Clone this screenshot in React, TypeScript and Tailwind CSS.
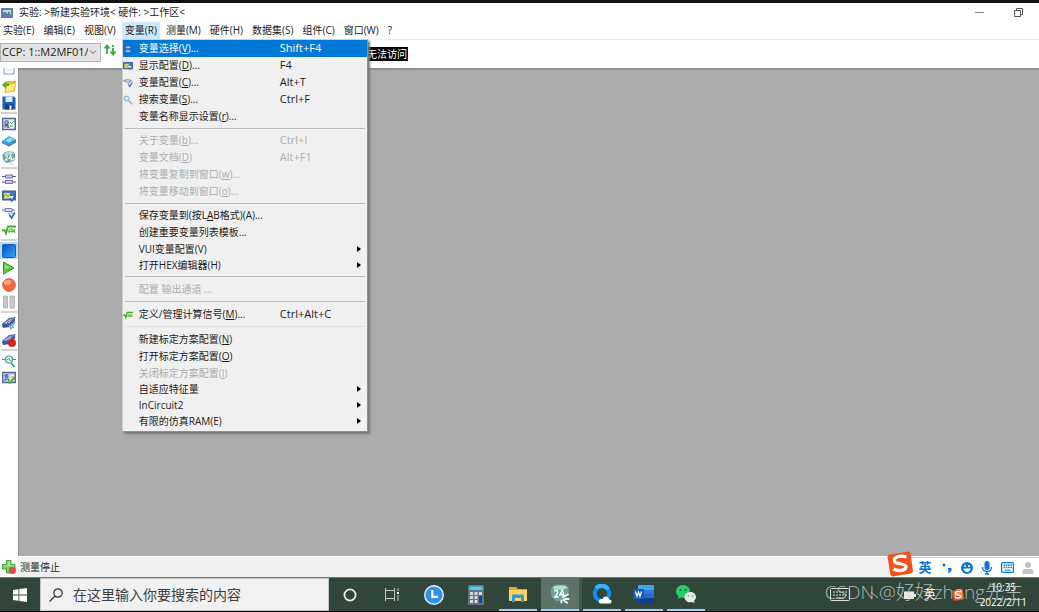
import React, { useState } from 'react';

type Item = {
  label: string;
  shortcut?: string;
  disabled?: boolean;
  submenu?: boolean;
  compact?: boolean;
  icon?: React.ReactNode;
};

const Svg = ({ children, className = 'w-3.5 h-3.5' }: { children: React.ReactNode; className?: string }) => (
  <svg viewBox="0 0 14 14" className={className} aria-hidden="true">{children}</svg>
);

const NewIcon = () => (
  <Svg>
    <path d="M2 0H12V13H2Z" fill="#fff" stroke="#7f9ccb" />
    <path d="M4 9H10" stroke="#d5e0f2" />
  </Svg>
);

const OpenIcon = () => (
  <Svg>
    <path d="M4 3L8 2L9 3L13.5 2L12.5 12L3 13.5Z" fill="#f0bd2b" stroke="#c4962d" strokeWidth=".6" />
    <path d="M5 6L13.5 4L12 12L3 13.5Z" fill="#fff176" stroke="#cfa52d" strokeWidth=".5" />
    <path d="M0 6L4 2V4.5H7V7H4V9.5Z" fill="#45b32e" />
  </Svg>
);

const SaveIcon = () => (
  <Svg>
    <path d="M.5 .5H12L13.5 2V13.5H.5Z" fill="#1d60b5" />
    <path d="M3.5 .5H10.5V6H3.5Z" fill="#d8ecff" />
    <path d="M3 8.5H11V13.5H3Z" fill="#123f80" />
    <path d="M7.5 9.5H9.5V13.5H7.5Z" fill="#fff" />
  </Svg>
);

const PanelIcon = () => (
  <Svg>
    <path d="M.7 1.5H13.3V12.5H.7Z" fill="#e5edf8" stroke="#526792" strokeWidth="1.4" />
    <path d="M2.5 3.5H7V10.5H2.5Z" fill="#a9b8d4" />
    <circle cx="4.5" cy="5.5" r="1.7" fill="#c7d4e7" stroke="#35446d" />
    <path d="M3 10.5V8H6V11" fill="none" stroke="#35446d" />
    <path d="M5 10.5H7.5" stroke="#c5506c" />
    <path d="M8 5L9.5 6.5L12 4M8 9H11" fill="none" stroke="#4cae3e" />
  </Svg>
);

const BookIcon = () => (
  <Svg>
    <path d="M0 7L7 2L14 5.5L7 11Z" fill="#45b5e3" />
    <path d="M0 7L7 10L14 5.5V8.5L7 12.5L0 9Z" fill="#3565ab" />
    <path d="M4 6.5L8 3.5L11 5.5L7 8.5Z" fill="#8de0f3" />
    <path d="M1 8.5L7 11L13 7.5" fill="none" stroke="#8fc4ec" strokeWidth=".6" />
  </Svg>
);

const InstrumentIcon = ({ className }: { className?: string }) => (
  <Svg className={className}>
    <path d="M2 1.5L5 .5H10.5L13 2.5V8L10 11L4.5 12L1 9L.5 4Z" fill="#6aa39a" />
    <path d="M2 2L5 1H10L12.5 2.5L9 4H3Z" fill="#b7d9d0" />
    <path d="M3 5C5 4 6 5 5 7L3.5 9H6M9 4L7 7.5H10M9.3 5.5V9" fill="none" stroke="#fff" strokeWidth="1.1" />
    <path d="M8.5 9.5L13 7M9 10.5L13.5 10.5M9 11L12.5 13.5M8 11L8 13.5" stroke="#e6f4f0" strokeWidth="1.4" />
    <path d="M8.5 10.2L12.5 9M8.5 12L10.5 13.5" stroke="#568c86" strokeWidth=".5" />
  </Svg>
);

const BarsIcon = () => (
  <Svg>
    <path d="M0 4.5H14M0 10H14" stroke="#575a87" />
    <path d="M3.5 3H10.5V6H3.5ZM3.5 8.5H10.5V11.5H3.5Z" fill="#c9c8ff" stroke="#5557a0" strokeWidth=".8" />
  </Svg>
);

const DisplayIcon = () => (
  <Svg>
    <path d="M.7 2H13.3V11H.7Z" fill="#4f79bd" stroke="#31599c" strokeWidth="1.2" />
    <path d="M2 4H8V9.5H2Z" fill="#f0e65c" />
    <path d="M2 8L4 5L6 8L8 5" fill="none" stroke="#569049" strokeWidth=".8" />
    <path d="M7 7H13L10.5 13Z" fill="#e8f1ff" />
    <path d="M8 9L9.8 12L13.5 6" fill="none" stroke="#2464bd" strokeWidth="1.5" />
  </Svg>
);

const ConfigIcon = () => (
  <Svg>
    <path d="M0 4H13" stroke="#5864a4" />
    <path d="M3 2.5H10V5.5H3Z" fill="#d7dcff" stroke="#5963a0" strokeWidth=".8" />
    <path d="M6.5 7H12.5L9.5 13Z" fill="#dcecff" stroke="#5473b5" strokeWidth=".6" />
    <path d="M7.5 9L9.5 12L13 6.5" fill="none" stroke="#2c62b2" strokeWidth="1.4" />
  </Svg>
);

const FormulaIcon = () => (
  <Svg>
    <path d="M0 7.5L2.5 7L4 10.5L6 3.5H14" fill="none" stroke="#3dad25" strokeWidth="1.8" />
    <path d="M7 9.8V7L8.5 6H10V9.5M10.5 7H12.5V10M7 8.5H13" fill="none" stroke="#4ab934" strokeWidth="1.2" />
  </Svg>
);

const SearchVarIcon = () => (
  <Svg>
    <circle cx="5" cy="5" r="3.5" fill="#c9efff" stroke="#6fb5d9" strokeWidth="1.4" />
    <path d="M8 8L13 13" stroke="#d69a76" strokeWidth="2.2" />
  </Svg>
);

const StopIcon = () => (
  <Svg>
    <defs>
      <linearGradient id="stop" x2="1" y2="1"><stop stopColor="#0753bc" /><stop offset="1" stopColor="#31a4ff" /></linearGradient>
    </defs>
    <rect x=".5" y=".5" width="13" height="13" rx="1" fill="url(#stop)" stroke="#1761bb" />
  </Svg>
);

const PlayIcon = () => (
  <Svg>
    <path d="M1.5 1L12 7L1.5 13Z" fill="#58c53a" stroke="#3e9c2c" strokeLinejoin="round" />
    <path d="M3 3.5L9 6.5L3 8Z" fill="#95df75" />
  </Svg>
);

const RecordIcon = () => (
  <Svg>
    <circle cx="7" cy="7" r="6.4" fill="#f8663e" stroke="#d75536" strokeWidth=".8" />
    <ellipse cx="5.5" cy="4.5" rx="3.5" ry="2.5" fill="#ffab83" />
  </Svg>
);

const PauseIcon = () => (
  <Svg>
    <path d="M1.5 1H5.5V13H1.5ZM8 1H12.5V13H8Z" fill="#c9c9c9" stroke="#a9a9a9" strokeWidth=".8" />
  </Svg>
);

const ChipIcon = ({ record }: { record?: boolean }) => (
  <Svg>
    <path d="M0 8L7 2L14 1L8 9L1 11Z" fill="#466eb7" />
    <path d="M2 7.5L8 3.5L12 2.5L7 7Z" fill="#d4e2f7" />
    <path d="M5 7L11 3" stroke="#bd4254" />
    <path d="M0 9L7 8L13 2V5L8 11L1 12Z" fill="#355aa3" />
    {record ? <circle cx="10" cy="10" r="3.8" fill="#df2115" stroke="#aa1711" strokeWidth=".5" /> : (
      <path d="M7 9L9 13L13 6M9 8L12 12" fill="none" stroke="#89a7d3" strokeWidth="1.4" />
    )}
  </Svg>
);

const ZoomSignalIcon = () => (
  <Svg>
    <path d="M0 5.5H3M11 5.5H14" stroke="#349887" strokeWidth="1.2" />
    <circle cx="7" cy="5.5" r="3.5" fill="#eefaf7" stroke="#459c8c" strokeWidth="1.2" />
    <path d="M5 5.5H6L7 4L8 7L9 5.5" fill="none" stroke="#35887b" strokeWidth=".7" />
    <path d="M9 8.5L12.5 13" stroke="#4a9c8f" strokeWidth="1.8" />
  </Svg>
);

const EditPanelIcon = () => (
  <Svg>
    <path d="M.7 1.5H13.3V11.5H.7Z" fill="#c1d2eb" stroke="#536791" strokeWidth="1.3" />
    <circle cx="4.5" cy="5" r="2" fill="#65769c" />
    <path d="M3 10V8H6.5V10" fill="none" stroke="#4a5c88" />
    <path d="M8 4.5H12M8 7.5H11" stroke="#fff" strokeWidth="1.2" />
    <path d="M7 12.5L12.5 6.5" stroke="#49ba2d" strokeWidth="2.2" />
    <circle cx="12.6" cy="6.6" r="1" fill="#e55336" />
  </Svg>
);

const WordIcon = () => (
  <svg viewBox="0 0 22 20" className="w-[22px] h-5" aria-hidden="true">
    <rect x="5" y="1" width="16" height="18" rx="1" fill="#2b6bc4" />
    <path d="M5 2Q5 1 6 1H20Q21 1 21 2V6H5Z" fill="#41a5ee" />
    <path d="M5 6H21V10H5Z" fill="#2b7cd3" />
    <path d="M5 14H21V18Q21 19 20 19H6Q5 19 5 18Z" fill="#103f91" />
    <rect y="5" width="11" height="10" rx="1" fill="#185abd" />
    <path d="M2.5 7.5L4 12.5L5.5 8L7 12.5L8.5 7.5" fill="none" stroke="#fff" strokeWidth="1.2" />
  </svg>
);

const WeChatIcon = () => (
  <svg viewBox="0 0 22 20" className="w-[22px] h-5" aria-hidden="true">
    <path d="M8 1C3.5 1 1 4 1 7.5C1 9.5 2 11 3.5 12L3 15L6 13.5C11 15 15 12 15 7.5C15 4 12.5 1 8 1Z" fill="#27cd68" />
    <circle cx="5.5" cy="6" r="1" fill="#0c6c32" /><circle cx="10.5" cy="6" r="1" fill="#0c6c32" />
    <path d="M15.5 8C11.5 8 9.5 10.5 9.5 13C9.5 17 13.5 19 17 18L19.5 19L19 17C23 13.5 20.5 8 15.5 8Z" fill="#e5e8e6" />
    <circle cx="13.5" cy="12" r=".8" fill="#7c8580" /><circle cx="17.5" cy="12" r=".8" fill="#7c8580" />
  </svg>
);

const SogouIcon = ({ className }: { className: string }) => (
  <svg viewBox="0 0 26 26" className={className} aria-hidden="true">
    <path d="M1.5 4L21 .5Q23 .5 23.5 2.5L26 20Q26 22 24 22.5L6 25.5Q4 25.5 3.5 23.5L.5 6Q.5 4.5 1.5 4Z" fill="#f4511e" />
    <path d="M19.5 6C13 4 6 6 7.5 10.5C9 14 19 11.5 19 16C18.5 20 11 20.5 6.5 18" fill="none" stroke="#fff" strokeWidth="3.2" />
  </svg>
);

const menus = ['实验(E)', '编辑(E)', '视图(V)', '变量(R)', '测量(M)', '硬件(H)', '数据集(S)', '组件(C)', '窗口(W)', '?'];

// '&' marks the mnemonic that follows it
const groups: Item[][] = [
  [
    { label: '变量选择(&V)...', shortcut: 'Shift+F4', icon: <BarsIcon /> },
    { label: '显示配置(&D)...', shortcut: 'F4', icon: <DisplayIcon /> },
    { label: '变量配置(&C)...', shortcut: 'Alt+T', icon: <ConfigIcon /> },
    { label: '搜索变量(&S)...', shortcut: 'Ctrl+F', icon: <SearchVarIcon /> },
    { label: '变量名称显示设置(&r)...' },
  ],
  [
    { label: '关于变量(&b)...', shortcut: 'Ctrl+I', disabled: true },
    { label: '变量文档(&D)', shortcut: 'Alt+F1', disabled: true },
    { label: '将变量复制到窗口(&w)...', disabled: true },
    { label: '将变量移动到窗口(&o)...', disabled: true },
  ],
  [
    { label: '保存变量到(按L&AB格式)(A)...' },
    { label: '创建重要变量列表模板...' },
    { label: 'VUI变量配置(V)', submenu: true, compact: true },
    { label: '打开HEX编辑器(H)', submenu: true, compact: true },
  ],
  [{ label: '配置 输出通道 ...', disabled: true }],
  [{ label: '定义/管理计算信号(&M)...', shortcut: 'Ctrl+Alt+C', icon: <FormulaIcon /> }],
  [
    { label: '新建标定方案配置(&N)' },
    { label: '打开标定方案配置(&O)' },
    { label: '关闭标定方案配置(&I)', disabled: true, compact: true },
    { label: '自适应特征量', submenu: true, compact: true },
    { label: 'InCircuit2', submenu: true, compact: true },
    { label: '有限的仿真RAM(E)', submenu: true, compact: true },
  ],
];

const tools: { name: string; icon: React.ReactNode; active?: boolean }[][] = [
  [{ name: '打开', icon: <OpenIcon /> }, { name: '保存', icon: <SaveIcon /> }],
  [{ name: '实验', icon: <PanelIcon /> }, { name: '数据集', icon: <BookIcon /> }, { name: '硬件', icon: <InstrumentIcon /> }],
  [{ name: '变量选择', icon: <BarsIcon /> }, { name: '显示配置', icon: <DisplayIcon /> }, { name: '变量配置', icon: <ConfigIcon /> }, { name: '计算信号', icon: <FormulaIcon /> }],
  [{ name: '停止', icon: <StopIcon />, active: true }, { name: '开始', icon: <PlayIcon /> }, { name: '记录', icon: <RecordIcon /> }, { name: '暂停', icon: <PauseIcon /> }],
  [{ name: '内存页', icon: <ChipIcon /> }, { name: '参考页', icon: <ChipIcon record /> }],
  [{ name: '信号', icon: <ZoomSignalIcon /> }, { name: '编辑', icon: <EditPanelIcon /> }],
];

const Label = ({ text }: { text: string }) => {
  const at = text.indexOf('&');
  if (at < 0) return <>{text}</>;
  return <>{text.slice(0, at)}<u>{text[at + 1]}</u>{text.slice(at + 2)}</>;
};

const DropMenu = () => {
  const [active, setActive] = useState('变量选择(&V)...');

  return (
    <div role="menu" className="absolute top-full left-0 z-20 w-[246px] bg-[#f0f0f0] border border-[#d0d0d0] border-r-[#909090] border-b-[#909090] pb-0.5 shadow-[2px_2px_2px_#777]">
      {groups.map((group, i) => (
        <div key={i} className={i === 0 ? '' : i > 2 ? 'pt-2 relative' : 'pt-[7px] relative'}>
          {i > 0 && <hr className={`absolute top-[3px] inset-x-0.5 border-t ${i === 5 ? 'border-[#dedede]' : 'border-[#bcbcbc]'}`} />}
          {group.map((item) => {
            const on = active === item.label;
            return (
              <button
                key={item.label}
                role="menuitem"
                disabled={item.disabled}
                onMouseEnter={() => setActive(item.label)}
                className={`flex w-full items-center text-left text-[10px] ${item.compact ? 'h-4' : 'h-[17px]'} ${on ? 'bg-[#0078d7] text-white' : item.disabled ? 'text-[#adadad]' : 'text-[#1c1c1c]'}`}
              >
                <span className="w-4 shrink-0 [&_svg]:h-2.5 [&_svg]:w-2.5">{item.icon}</span>
                <span className="w-[141px] shrink-0 whitespace-nowrap"><Label text={item.label} /></span>
                <span className="flex-1 text-[11px]">{item.shortcut}</span>
                {item.submenu && (
                  <svg viewBox="0 0 4 6" className="mr-1.5 h-1.5 w-1" aria-hidden="true"><path d="M0 0L4 3L0 6Z" fill="#000" /></svg>
                )}
              </button>
            );
          })}
        </div>
      ))}
    </div>
  );
};

const TitleBar = () => (
  <header className="flex h-[19px] shrink-0 items-center pr-4 text-[10px]">
    <svg viewBox="0 0 12 10" className="ml-px h-2.5 w-3" aria-hidden="true">
      <path d="M0 0H12V10H0Z" fill="#5c7db5" />
      <path d="M2 2H10V8H2Z" fill="#d8e3a1" />
      <path d="M2 8V5L4 3L6 6L8 3L10 8Z" fill="#4583c0" />
    </svg>
    <h1 className="ml-1.5 flex-1 whitespace-pre">实验: &gt;新建实验环境&lt; 硬件: &gt;工作区&lt;</h1>
    <button aria-label="最小化" className="mr-[30px]">
      <svg viewBox="0 0 9 9" className="h-[9px] w-[9px]"><path d="M0 4.5H9" stroke="#8a8a8a" /></svg>
    </button>
    <button aria-label="还原">
      <svg viewBox="0 0 9 9" className="h-[9px] w-[9px]" fill="none" stroke="#555"><path d="M.5 2.5H6.5V8.5H.5ZM2.5 2V.5H8.5V6.5H7" /></svg>
    </button>
  </header>
);

const MenuBar = () => (
  <nav className="flex h-[17px] shrink-0 gap-[3px] text-[10px]">
    {menus.map((name) => (
      <div key={name} className="relative">
        <button className={`h-full px-[3px] whitespace-nowrap ${name === '变量(R)' ? 'bg-[#cce8ff]' : ''}`}>{name}</button>
        {name === '变量(R)' && <DropMenu />}
      </div>
    ))}
  </nav>
);

const Toolbar = () => (
  <div className="flex h-[29px] shrink-0 items-center border-t border-[#ededed]">
    <div className="relative mb-1 flex items-center">
      <select aria-label="设备" className="h-[19px] w-[101px] appearance-none border border-[#b5b5b5] bg-[#e3e3e3] pl-px pr-3 text-[11px] leading-4 outline-none">
        <option>CCP: 1::M2MF01/</option>
      </select>
      <svg viewBox="0 0 8 5" className="pointer-events-none absolute right-1 h-[5px] w-2" fill="none" stroke="#666"><path d="M1 .5L4 3.5L7 .5" /></svg>
    </div>
    <button aria-label="切换" className="mb-2 ml-[3px]">
      <svg viewBox="0 0 12 12" className="h-3 w-3" fill="none" stroke="#34ac38" strokeWidth="1.8">
        <path d="M3 10V2M.5 4.5L3 1.5L5.5 4.5" /><path d="M9 1V3M9 4V10M6.5 7.5L9 10.5L11.5 7.5" />
      </svg>
    </button>
    <div className="flex w-[292px] justify-end">
      <span className="bg-black px-px text-[10px] leading-[14px] text-white">无法访问</span>
    </div>
  </div>
);

const SideBar = () => (
  <aside className="flex w-[18px] shrink-0 flex-col bg-white">
    <button aria-label="新建" className="flex h-[9px] items-end overflow-hidden pl-0.5 pb-0.5"><NewIcon /></button>
    {tools.map((group, i) => (
      <div key={i}>
        {i > 0 && <hr className="mx-px my-px border-t-2 border-[#d2d2d2]" />}
        {group.map((tool) => (
          <button
            key={tool.name}
            aria-label={tool.name}
            className={`flex h-[17px] w-full items-center justify-center ${tool.active ? 'bg-[#b9dcfa]' : ''}`}
          >
            {tool.icon}
          </button>
        ))}
      </div>
    ))}
  </aside>
);

const ImeBar = () => (
  <div className="flex h-full items-center border-t border-[#c6d0e4] bg-white text-[#0b76d8]">
    <SogouIcon className="-mt-2 -ml-1 h-[26px] w-[26px]" />
    <span className="w-6 text-center text-[13px] font-bold">英</span>
    <button aria-label="标点" className="flex w-5 justify-center">
      <svg viewBox="0 0 12 12" className="h-3 w-3" fill="currentColor"><circle cx="3" cy="3" r="1.5" /><path d="M7 6H10.5V8.5L8.5 11H7L8 8.5H7Z" /></svg>
    </button>
    <button aria-label="表情" className="flex w-5 justify-center">
      <svg viewBox="0 0 12 12" className="h-3 w-3"><circle cx="6" cy="6" r="6" fill="currentColor" /><path d="M2.5 6.5H9.5Q9 10 6 10T2.5 6.5Z" fill="#fff" /><circle cx="4" cy="4" r="1" fill="#fff" /><circle cx="8" cy="4" r="1" fill="#fff" /></svg>
    </button>
    <button aria-label="语音" className="flex w-5 justify-center">
      <svg viewBox="0 0 12 14" className="h-3.5 w-3"><rect x="3.5" width="5" height="9" rx="2.5" fill="currentColor" /><path d="M1.5 6Q1.5 10.5 6 10.5T10.5 6M6 10V13M4 13H8" fill="none" stroke="currentColor" strokeWidth="1.3" /></svg>
    </button>
    <button aria-label="键盘" className="flex w-5 justify-center">
      <svg viewBox="0 0 13 11" className="h-[11px] w-[13px]"><rect x=".6" y=".6" width="11.8" height="9.8" rx="1" fill="none" stroke="currentColor" strokeWidth="1.2" /><path d="M2.5 3.2H11M2.5 5.5H11" stroke="currentColor" strokeDasharray="1.5 .8" strokeWidth="1.4" /><path d="M3.5 8.2H9.5" stroke="currentColor" /></svg>
    </button>
    <button aria-label="用户" className="flex w-[22px] justify-center text-[#c4c4c4]">
      <svg viewBox="0 0 12 12" className="h-3 w-3" fill="currentColor"><circle cx="6" cy="3" r="3" /><path d="M.5 12V9Q.5 7 3 7H9Q11.5 7 11.5 9V12Z" /></svg>
    </button>
  </div>
);

const StatusBar = () => (
  <div className="flex h-[21px] shrink-0 items-center border-t border-white bg-[#f0f0f0]">
    <div className="flex h-full w-[18px] items-center justify-center bg-white">
      <Svg>
        <path d="M4.5 .5H9V4.5H13V9H9V13H4.5V9H.5V4.5H4.5Z" fill="#6fd35b" stroke="#36942b" strokeWidth=".8" />
        <path d="M5.5 1.5H8V5.5H12V6.5H1.5V5.5H5.5Z" fill="#a5e893" />
        <circle cx="10.5" cy="10.5" r="3.2" fill="#e84b43" stroke="#b4322e" strokeWidth=".5" />
      </Svg>
    </div>
    <p className="ml-0.5 flex-1 text-[10px]">测量停止</p>
    <ImeBar />
  </div>
);

const apps: { name: string; icon: React.ReactNode; state?: 'open' | 'active' }[] = [
  { name: 'Cortana', icon: <svg viewBox="0 0 14 14" className="h-3.5 w-3.5"><circle cx="7" cy="7" r="5.6" fill="none" stroke="#e8ebe9" strokeWidth="1.8" /></svg> },
  { name: '任务视图', icon: (
    <svg viewBox="0 0 14 13" className="h-[13px] w-3.5" fill="none" stroke="#c3cbc6"><path d="M.5 0V2.5H9.5V0M.5 13V10.5H9.5V13M.5 2.5V10.5M9.5 2.5V10.5M13 0V3M13 7V13" /><path d="M12 5H14" stroke="#fff" strokeWidth="2" /></svg>
  ) },
  { name: '时钟', icon: (
    <svg viewBox="0 0 20 20" className="h-5 w-5"><circle cx="10" cy="10" r="9.3" fill="#2f91ec" stroke="#e6f1fa" strokeWidth="1.4" /><path d="M8.3 5V11.8H14" fill="none" stroke="#fff" strokeWidth="2.2" /></svg>
  ) },
  { name: '计算器', icon: (
    <svg viewBox="0 0 16 20" className="h-5 w-4"><rect width="16" height="20" rx="1" fill="#66727f" /><path d="M1.5 1.5H14.5V5H1.5Z" fill="#43d1f2" /><path d="M2 7H5V10H2ZM6.5 7H9.5V10H6.5ZM11 7H14V10H11ZM2 11H5V14H2ZM6.5 11H9.5V14H6.5ZM2 15H5V18H2ZM6.5 15H9.5V18H6.5Z" fill="#d3d9df" /><path d="M11 11H14V18H11Z" fill="#0c4c9d" /></svg>
  ) },
  { name: '文件资源管理器', state: 'open', icon: (
    <svg viewBox="0 0 18 16" className="h-4 w-[18px]"><path d="M0 1H7L9 3H18V15H0Z" fill="#e6a51b" /><path d="M0 4H18V15H0Z" fill="#ffd45e" /><path d="M3 16V9.5Q3 8.5 4 8.5H14Q15 8.5 15 9.5V16H12V12H6V16Z" fill="#3a96dd" /></svg>
  ) },
  { name: '实验环境', state: 'active', icon: <InstrumentIcon className="h-5 w-5" /> },
  { name: '浏览器', state: 'open', icon: (
    <svg viewBox="0 0 20 20" className="h-5 w-5"><circle cx="10" cy="9.5" r="7.3" fill="none" stroke="#168df4" strokeWidth="4" /><path d="M4 4.3A7.3 7.3 0 0 1 16 5" fill="none" stroke="#34b5ff" strokeWidth="4" /><path d="M9 19.5Q6 19 7 16.5Q8 14.5 10.5 15Q12.5 11 16 13.5Q17 14.5 17 15.5Q20 15.5 19.5 18L18.5 19.5Z" fill="#fff" /></svg>
  ) },
  { name: 'Word', state: 'open', icon: <WordIcon /> },
  { name: '微信', state: 'open', icon: <WeChatIcon /> },
];

const Taskbar = () => (
  <footer className="relative flex h-[35px] shrink-0 border-t border-b border-t-[#6d7b73] border-b-black bg-[#30463a]">
    <button aria-label="开始" className="flex w-10 items-center justify-center">
      <svg viewBox="0 0 14 14" className="h-3.5 w-3.5" fill="#fff"><path d="M0 2L5.5 1.2V6.6H0ZM6.3 1.1L14 0V6.6H6.3ZM0 7.4H5.5V12.8L0 12ZM6.3 7.4H14V14L6.3 12.9Z" /></svg>
    </button>
    <label className="flex w-[289px] items-center border border-[#c4c4c4] bg-[#f1f1f1] pl-2">
      <svg viewBox="0 0 14 14" className="h-3.5 w-3.5" fill="none" stroke="#333" strokeWidth="1.2"><circle cx="9" cy="5" r="4.2" /><path d="M6 8L.5 13.5" /></svg>
      <input type="text" aria-label="搜索" placeholder="在这里输入你要搜索的内容" className="ml-2.5 min-w-0 flex-1 bg-transparent text-[14px] outline-none placeholder:text-[#404040]" />
    </label>
    {apps.map((app) => (
      <button key={app.name} aria-label={app.name} className="flex w-[42px] shrink-0 px-0.5">
        <span className={`flex h-full w-full items-center justify-center ${app.state === 'active' ? 'border-b-2 border-[#9fd0f5] bg-[#5f7268] shadow-[3px_0_0_#46594e]' : app.state === 'open' ? 'border-b-2 border-[#9fd0f5]' : ''}`}>
          {app.icon}
        </span>
      </button>
    ))}
    <div className="ml-auto flex items-center pr-3 text-white">
      <svg viewBox="0 0 20 14" className="h-3.5 w-5" fill="none" stroke="#dfe3e0"><rect x=".5" y=".5" width="19" height="12" rx="1" /><path d="M3 4H17M3 7H17" strokeDasharray="2 1" /><path d="M6 10H14" /></svg>
      <svg viewBox="0 0 10 8" className="ml-5 h-2 w-2.5" fill="none" stroke="#aab3ad"><path d="M1 1L8 7" /></svg>
      <svg viewBox="0 0 12 10" className="ml-6 h-2.5 w-3" fill="#e8ebe9"><path d="M0 2H10V4H12V7H10V9H0Z" /></svg>
      <span className="ml-2 text-[12px]">英</span>
      <SogouIcon className="ml-4 h-3 w-3" />
      <time className="ml-4 flex flex-col items-center text-[10px] leading-[15px]">
        <span>10:35</span>
        <span>2022/2/11</span>
      </time>
    </div>
    <p className="pointer-events-none absolute top-0 right-4 text-[19px] leading-7 font-light whitespace-nowrap text-[#d2d6d3]/80">CSDN @好好zhang先生</p>
  </footer>
);

const App = () => (
  <div className="flex h-screen flex-col overflow-hidden border-t-[3px] border-[#111] bg-white font-['Open_Sans','Noto_Sans_CJK_SC',sans-serif] text-[#1c1c1c]">
    <TitleBar />
    <MenuBar />
    <Toolbar />
    <div className="flex min-h-0 flex-1">
      <SideBar />
      <main className="flex-1 border-t-2 border-l border-[#909191] bg-[#abadac]" />
    </div>
    <StatusBar />
    <Taskbar />
  </div>
);

export default App;
